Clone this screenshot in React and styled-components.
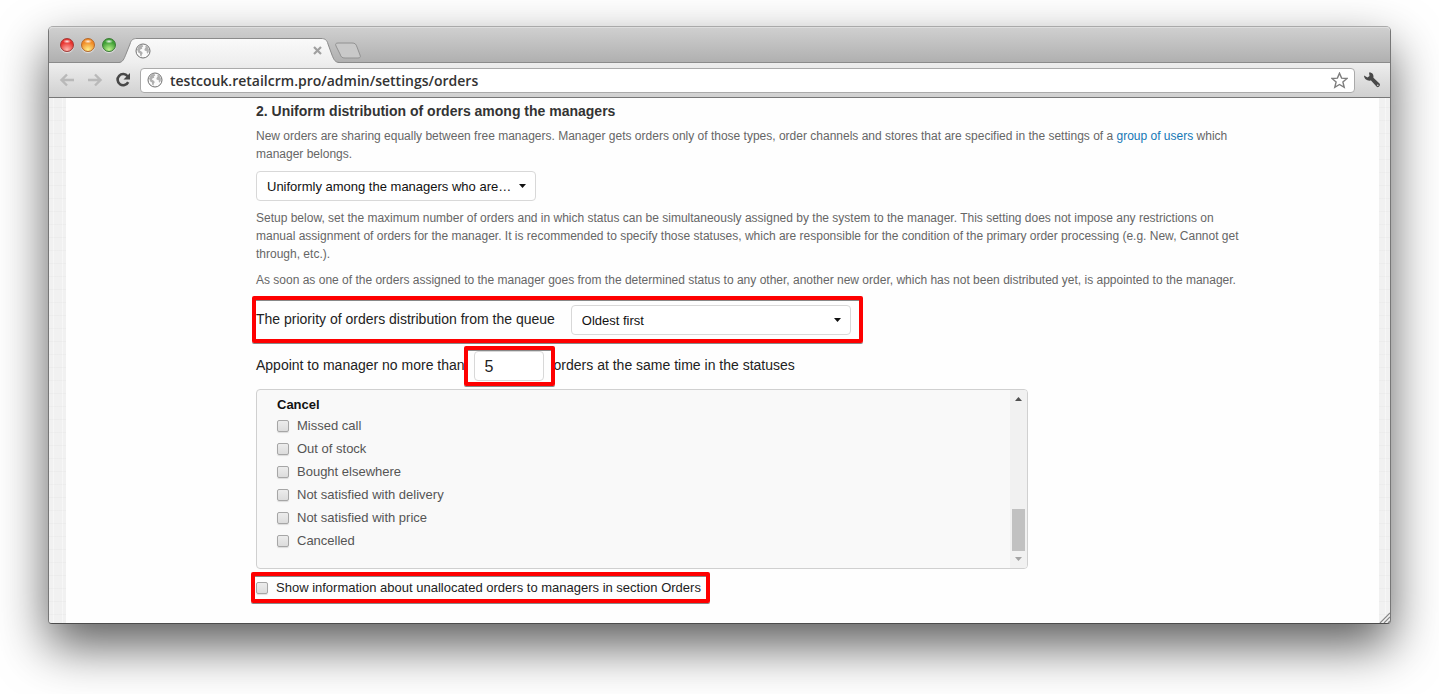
import React, { useState } from 'react';
import styled, { createGlobalStyle } from 'styled-components';

const GlobalStyle = createGlobalStyle`
  * {
    box-sizing: border-box;
  }
  body {
    margin: 0;
    background: #fff;
    font-family: 'Liberation Sans', Arial, sans-serif;
    color: #222;
  }
  p, h2 {
    margin: 0;
  }
`;

const Desktop = styled.div`
  padding: 26px 48px 70px;
  overflow: hidden;
`;

const Window = styled.div`
  border: 1px solid #777;
  border-top-color: #aaa;
  border-bottom-color: #4c4c4c;
  border-radius: 5px 5px 4px 4px;
  box-shadow: 0 22px 50px rgba(0, 0, 0, 0.64);
  background: #fefefe;
`;

const TabStrip = styled.div`
  display: flex;
  align-items: flex-end;
  height: 36px;
  border-radius: 4px 4px 0 0;
  border-bottom: 1px solid #8b8b8b;
  box-shadow: inset 0 1px 0 #dedede;
  background: linear-gradient(#d0d0d0, #b0b0b0);
`;

const Lights = styled.div`
  display: flex;
  gap: 7px;
  padding: 0 3px 10px 11px;
`;

const Light = styled.button`
  width: 14px;
  height: 14px;
  padding: 0;
  border: 1px solid ${(props) => props.$edge};
  border-radius: 50%;
  background: radial-gradient(ellipse 4px 2px at 50% 20%, rgba(255, 255, 255, 0.9), transparent),
    radial-gradient(circle at 50% 90%, ${(props) => props.$glow}, ${(props) => props.$color} 65%);
  box-shadow: 0 1px 1px rgba(255, 255, 255, 0.6);
`;

const Tab = styled.div`
  position: relative;
  display: flex;
  align-items: center;
  justify-content: space-between;
  width: 220px;
  height: 25px;
  margin-bottom: -1px;
  padding: 0 17px 0 16px;
`;

const TabShape = styled.svg`
  position: absolute;
  left: 0;
  top: 0;
  width: 100%;
  height: 100%;
`;

const TabIcon = styled.span`
  position: relative;
  display: flex;
`;

const CloseButton = styled.button`
  position: relative;
  display: flex;
  padding: 0;
  border: 0;
  background: none;
`;

const NewTabButton = styled.button`
  display: flex;
  padding: 0;
  margin: 0 0 3px -5px;
  border: 0;
  background: none;
`;

const Toolbar = styled.div`
  display: flex;
  align-items: center;
  height: 35px;
  padding: 0 4px;
  border-bottom: 1px solid #777;
  background: linear-gradient(#eeeeee, #d0d0d0);
`;

const ToolButton = styled.button`
  display: flex;
  justify-content: center;
  width: 28px;
  flex: none;
  padding: 0;
  border: 0;
  background: none;
`;

const Address = styled.label`
  display: flex;
  align-items: center;
  flex: 1;
  gap: 7px;
  height: 25px;
  margin: 0 3px;
  padding: 0 6px;
  border: 1px solid #aaa;
  border-radius: 4px;
  background: #fff;
`;

const AddressInput = styled.input`
  flex: 1;
  min-width: 0;
  padding: 0;
  border: 0;
  outline: 0;
  background: none;
  font: 600 14px 'Open Sans', sans-serif;
  color: #333;
`;

const StarButton = styled.button`
  display: flex;
  padding: 0;
  border: 0;
  background: none;
`;

const Viewport = styled.div`
  position: relative;
  padding: 0 11px 0 17px;
  border-radius: 0 0 3px 3px;
  background: repeating-linear-gradient(0deg, transparent 0 8px, rgba(0, 0, 0, 0.018) 8px 9px, transparent 9px 13px),
    repeating-linear-gradient(90deg, transparent 0 4px, rgba(255, 255, 255, 0.4) 4px 5px, transparent 5px 9px), #f1f1f1;
`;

const Grip = styled.svg`
  position: absolute;
  right: 0;
  bottom: 0;
`;

const Page = styled.main`
  padding: 3px 128px 24px 190px;
  background: #fefefe;
`;

const Title = styled.h2`
  font-size: 14px;
  line-height: 20px;
  color: #333;
`;

const Note = styled.p`
  margin: ${(props) => props.$top}px 0 8px;
  font-size: 12px;
  line-height: 18px;
  color: #666;

  a {
    color: #1578b5;
    text-decoration: none;
  }
`;

const SelectBox = styled.span`
  position: relative;
  display: block;
  width: 280px;
  height: 30px;

  svg {
    position: absolute;
    right: 10px;
    top: 13px;
    pointer-events: none;
  }
`;

const Select = styled.select`
  appearance: none;
  width: 100%;
  height: 100%;
  padding: 0 24px 0 10px;
  border: 1px solid #d8d8d8;
  border-radius: 4px;
  background: #fff;
  font: 13px 'Liberation Sans', Arial, sans-serif;
  color: #111;
`;

const Row = styled.div`
  position: relative;
  display: flex;
  align-items: center;
  width: fit-content;
  height: 30px;
  margin-top: 16px;
  font-size: 14px;
`;

const RowLabel = styled.label`
  margin-right: ${(props) => props.$gap}px;
  padding-bottom: 2px;
`;

const CountBox = styled.span`
  position: relative;
  margin-right: 10px;
`;

const CountInput = styled.input`
  display: block;
  width: 70px;
  height: 30px;
  padding: 2px 10px 0;
  border: 1px solid #d8d8d8;
  border-radius: 4px;
  background: #fff;
  font: 16px 'Liberation Sans', Arial, sans-serif;
  color: #222;
`;

const Highlight = styled.span`
  position: absolute;
  inset: ${(props) => props.$inset};
  border: 4px solid #fe0000;
  border-radius: 2px;
  box-shadow: 0 1px 0 #888, inset 0 1px 0 #888;
  pointer-events: none;
`;

const StatusBox = styled.div`
  display: flex;
  max-width: 772px;
  height: 180px;
  margin-top: 8px;
  border: 1px solid #d0d0d0;
  border-radius: 4px;
  background: #f9f9f9;
  overflow: hidden;
`;

const StatusList = styled.fieldset`
  flex: 1;
  margin: 0;
  padding: 6px 20px;
  border: 0;
  font-size: 13px;
`;

const GroupName = styled.legend`
  float: left;
  width: 100%;
  padding: 0;
  font-weight: 700;
  line-height: 18px;
  color: #111;
`;

const Status = styled.label`
  display: flex;
  align-items: center;
  clear: both;
  gap: 8px;
  height: 23px;
  color: #555;
`;

const Checkbox = styled.input`
  appearance: none;
  width: 12px;
  height: 12px;
  margin: 0;
  border: 1px solid #a6a6a6;
  border-radius: 2px;
  background: linear-gradient(#ececec, #dcdcdc);
  box-shadow: 0 1px 1px rgba(0, 0, 0, 0.12);

  &:checked {
    background: #777;
  }
`;

const ScrollBar = styled.div`
  display: flex;
  flex-direction: column;
  align-items: center;
  width: 17px;
  padding: 7px 0;
  background: #f1f1f1;
`;

const ScrollThumb = styled.div`
  width: 13px;
  height: 42px;
  margin: auto 0 6px;
  background: #c1c1c1;
`;

const ShowInfo = styled.label`
  position: relative;
  display: flex;
  align-items: center;
  gap: 8px;
  width: fit-content;
  height: 23px;
  margin-top: 7px;
  font-size: 13px;
  color: #222;
`;

const Globe = () => (
  <svg width="16" height="16" viewBox="0 0 16 16">
    <circle cx="8" cy="8" r="7" fill="#fafafa" stroke="#707070" />
    <path d="M2 6.5 3.4 3.7 5.4 2 7.8 2.3 8.2 3.4 6.8 4.4 7.3 5.8 5.6 6.2 4.8 7.6 6.5 8.4 7.8 10 6.8 11.8 6.4 13.8 5.2 12.8 5 10.6 3.2 9.4 2.6 7.8Z" fill="#b0b0b0" />
    <path d="M10.2 2.4 12.4 3.5 13.8 6 13.9 8.3 12.8 10.8 11.8 9.8 11.6 8.1 9.8 7.7 9.4 6 10.6 4.8Z" fill="#b0b0b0" />
  </svg>
);

const Arrow = ({ forward }) => (
  <svg width="16" height="14" viewBox="0 0 16 14" fill="none" stroke="#b9b9b9" strokeWidth="2.4">
    <path d={forward ? 'M1 7H13M8 1.5 13.5 7 8 12.5' : 'M15 7H3M8 1.5 2.5 7 8 12.5'} />
  </svg>
);

const Caret = () => (
  <svg width="7" height="4" viewBox="0 0 7 4">
    <path d="M0 0H7L3.5 4Z" fill="#111" />
  </svg>
);

const STATUSES = [
  'Missed call',
  'Out of stock',
  'Bought elsewhere',
  'Not satisfied with delivery',
  'Not satisfied with price',
  'Cancelled',
];

const BrowserHeader = () => (
  <header>
    <TabStrip>
      <Lights>
        <Light aria-label="Close window" $edge="#a33835" $color="#e8302c" $glow="#ffb8b0" />
        <Light aria-label="Minimize window" $edge="#b5682a" $color="#f08a25" $glow="#fff08a" />
        <Light aria-label="Zoom window" $edge="#3b7a35" $color="#3f9f35" $glow="#c0f58e" />
      </Lights>
      <Tab>
        <TabShape viewBox="0 0 220 25" preserveAspectRatio="none">
          <defs>
            <linearGradient id="tab" x1="0" y1="0" x2="0" y2="1">
              <stop offset="0" stopColor="#fafafa" />
              <stop offset="1" stopColor="#eeeeee" />
            </linearGradient>
          </defs>
          <path
            d="M0 25C4 24 5 21 7 16L11 6C12 2 14 .5 18 .5H202C206 .5 208 2 209 6L213 17C215 22 216 24 220 25Z"
            fill="url(#tab)"
          />
          <path
            d="M0 24.5C4 24 5 21 7 16L11 6C12 2 14 .5 18 .5H202C206 .5 208 2 209 6L213 17C215 22 216 24 220 24.5"
            fill="none"
            stroke="#8b8b8b"
          />
        </TabShape>
        <TabIcon>
          <Globe />
        </TabIcon>
        <CloseButton aria-label="Close tab">
          <svg width="9" height="9" viewBox="0 0 9 9" stroke="#a0a0a0" strokeWidth="2.2">
            <path d="M1 1 8 8M8 1 1 8" />
          </svg>
        </CloseButton>
      </Tab>
      <NewTabButton aria-label="New tab">
        <svg width="28" height="17" viewBox="0 0 28 17">
          <path
            d="M4 1H18C21 1 22 2 23 5L26 13C27 15 26 16 24 16H11C8 16 7 15 6 12L2 4C1 2 2 1 4 1Z"
            fill="#c9c9c9"
            stroke="#929292"
          />
        </svg>
      </NewTabButton>
    </TabStrip>
    <Toolbar>
      <ToolButton aria-label="Back">
        <Arrow />
      </ToolButton>
      <ToolButton aria-label="Forward">
        <Arrow forward />
      </ToolButton>
      <ToolButton aria-label="Reload">
        <svg width="16" height="16" viewBox="0 0 16 16">
          <path d="M12.6 4.2A5.6 5.6 0 1 0 13.2 10.2" fill="none" stroke="#484848" strokeWidth="2.6" />
          <path d="M15 1V7.5H8.5Z" fill="#484848" />
        </svg>
      </ToolButton>
      <Address>
        <Globe />
        <AddressInput aria-label="Address" defaultValue="testcouk.retailcrm.pro/admin/settings/orders" />
        <StarButton aria-label="Bookmark">
          <svg width="17" height="17" viewBox="0 0 17 17" fill="#fff" stroke="#7d7d7d" strokeWidth="1.4">
            <path d="M8.5 1.2 10.6 6.1 16 6.5 11.9 10 13.2 15.3 8.5 12.5 3.8 15.3 5.1 10 1 6.5 6.4 6.1Z" />
          </svg>
        </StarButton>
      </Address>
      <ToolButton aria-label="Settings">
        <svg width="18" height="18" viewBox="0 0 18 18">
          <path
            d="M1 4.5 4.5 6.5 6.5 5 6 1.6C9 1.2 11 3.5 10.4 6.8L16.5 12.6C18 14.2 15.6 17.2 13.7 15.8L8 9.5C4.5 10.3 1 8 1 4.5Z"
            fill="#484848"
          />
          <circle cx="14.8" cy="14.2" r="0.8" fill="#ddd" />
        </svg>
      </ToolButton>
    </Toolbar>
  </header>
);

const App = () => {
  const [count, setCount] = useState('5');

  return (
    <Desktop>
      <GlobalStyle />
      <Window>
        <BrowserHeader />
        <Viewport>
          <Page>
            <Title>2. Uniform distribution of orders among the managers</Title>
            <Note $top={6}>
              New orders are sharing equally between free managers. Manager gets orders only of those types, order
              channels and stores that are specified in the settings of a <a href="#groups">group of users</a> which
              manager belongs.
            </Note>
            <SelectBox>
              <Select aria-label="Distribution">
                <option>Uniformly among the managers who are…</option>
              </Select>
              <Caret />
            </SelectBox>
            <Note $top={8}>
              Setup below, set the maximum number of orders and in which status can be simultaneously assigned by the
              system to the manager. This setting does not impose any restrictions on manual assignment of orders for
              the manager. It is recommended to specify those statuses, which are responsible for the condition of the
              primary order processing (e.g. New, Cannot get through, etc.).
            </Note>
            <Note $top={8}>
              As soon as one of the orders assigned to the manager goes from the determined status to any other, another
              new order, which has not been distributed yet, is appointed to the manager.
            </Note>
            <Row>
              <RowLabel htmlFor="priority" $gap={16}>
                The priority of orders distribution from the queue
              </RowLabel>
              <SelectBox>
                <Select id="priority">
                  <option>Oldest first</option>
                </Select>
                <Caret />
              </SelectBox>
              <Highlight $inset="-9px -12px -8px -4px" />
            </Row>
            <Row>
              <RowLabel htmlFor="count" $gap={9}>
                Appoint to manager no more than
              </RowLabel>
              <CountBox>
                <CountInput id="count" value={count} onChange={(e) => setCount(e.target.value)} />
                <Highlight $inset="-5px -11px -5px -10px" />
              </CountBox>
              <RowLabel htmlFor="count" $gap={0}>
                orders at the same time in the statuses
              </RowLabel>
            </Row>
            <StatusBox>
              <StatusList>
                <GroupName>Cancel</GroupName>
                {STATUSES.map((status) => (
                  <Status key={status}>
                    <Checkbox type="checkbox" />
                    {status}
                  </Status>
                ))}
              </StatusList>
              <ScrollBar>
                <svg width="7" height="4" viewBox="0 0 7 4">
                  <path d="M0 4H7L3.5 0Z" fill="#505050" />
                </svg>
                <ScrollThumb />
                <svg width="7" height="4" viewBox="0 0 7 4">
                  <path d="M0 0H7L3.5 4Z" fill="#a3a3a3" />
                </svg>
              </ScrollBar>
            </StatusBox>
            <ShowInfo>
              <Checkbox type="checkbox" />
              Show information about unallocated orders to managers in section Orders
              <Highlight $inset="-4px -9px -4px -5px" />
            </ShowInfo>
          </Page>
          <Grip width="11" height="11" viewBox="0 0 11 11" stroke="#888" strokeWidth="1.2">
            <path d="M1 11 11 1M5 11 11 5M9 11 11 9" />
          </Grip>
        </Viewport>
      </Window>
    </Desktop>
  );
};

export default App;
